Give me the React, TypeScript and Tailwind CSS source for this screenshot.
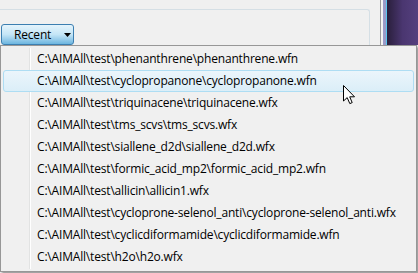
const files = [
  "C:\\AIMAll\\test\\phenanthrene\\phenanthrene.wfn",
  "C:\\AIMAll\\test\\cyclopropanone\\cyclopropanone.wfn",
  "C:\\AIMAll\\test\\triquinacene\\triquinacene.wfx",
  "C:\\AIMAll\\test\\tms_scvs\\tms_scvs.wfx",
  "C:\\AIMAll\\test\\siallene_d2d\\siallene_d2d.wfx",
  "C:\\AIMAll\\test\\formic_acid_mp2\\formic_acid_mp2.wfn",
  "C:\\AIMAll\\test\\allicin\\allicin1.wfx",
  "C:\\AIMAll\\test\\cycloprone-selenol_anti\\cycloprone-selenol_anti.wfx",
  "C:\\AIMAll\\test\\cyclicdiformamide\\cyclicdiformamide.wfn",
  "C:\\AIMAll\\test\\h2o\\h2o.wfx",
];

function Cursor() {
  return (
    <svg width="13" height="20" viewBox="0 0 13 20" className="absolute left-[343px] top-[85px]">
      <path
        d="M0.5 0.5 L0.5 16 L4.2 12.6 L6.8 18.6 L9.2 17.6 L6.7 11.8 L11.5 11.8 Z"
        fill="white"
        stroke="black"
        strokeWidth="1"
        strokeLinejoin="miter"
      />
    </svg>
  );
}

export default function App() {
  return (
    <div className="relative h-[273px] w-[418px] overflow-hidden bg-[#f0f0f0] font-['Open_Sans','Liberation_Sans',sans-serif] text-[12px] tracking-[-0.18px] text-black">
      <div className="flex h-[45px]">
        <div className="flex flex-1 flex-col">
          <div className="mt-[9px] mr-[10px] h-[36px] rounded-tr-[3px] border-t border-r border-[#d5dfe5]" />
        </div>
        <div className="flex h-full w-[38px]">
          <div className="w-[1px] bg-[#9a9a9a]" />
          <div className="w-[2px] bg-[#f4f4f4]" />
          <div className="w-[3px] bg-[#9a9ac8]" />
          <div className="w-[1px] bg-[#5ac8f0]" />
          <div className="flex-1 bg-gradient-to-r from-[#2a1f3c] via-[#4a3670] to-[#55407e]" />
        </div>
      </div>

      <button className="absolute left-[1px] top-[24px] flex h-[21px] w-[73px] items-center rounded-[3px] border border-[#3c7fb1] bg-gradient-to-b from-[#e5f4fc] via-[#c4e5f6] to-[#6cb6e0] pl-[12px] text-[12px] leading-none">
        <span>Recent</span>
        <svg width="8" height="4" viewBox="0 0 8 4" className="ml-[13px]">
          <path d="M0 0 H7 L3.5 4 Z" fill="black" />
        </svg>
      </button>

      <div className="absolute left-0 top-[45px] h-[227px] w-[417px] border border-[#979797] bg-[#f0f0f0] shadow-[2px_2px_2px_rgba(0,0,0,0.35)]">
        <div className="absolute bottom-[2px] left-[28px] top-[2px] flex">
          <div className="w-[1px] bg-[#e2e3e3]" />
          <div className="w-[1px] bg-white" />
        </div>
        <div className="relative flex flex-col px-[2px] py-[2px]">
          {files.map((f, i) => (
            <div
              key={f}
              className={
                i === 1
                  ? "flex h-[22px] items-center rounded-[3px] border border-[#aeddf3] bg-gradient-to-b from-[#ebf5fb] to-[#dbeef8] pl-[33px]"
                  : "flex h-[22px] items-center border border-transparent pl-[33px]"
              }
            >
              {f}
            </div>
          ))}
        </div>
      </div>

      <Cursor />
    </div>
  );
}
